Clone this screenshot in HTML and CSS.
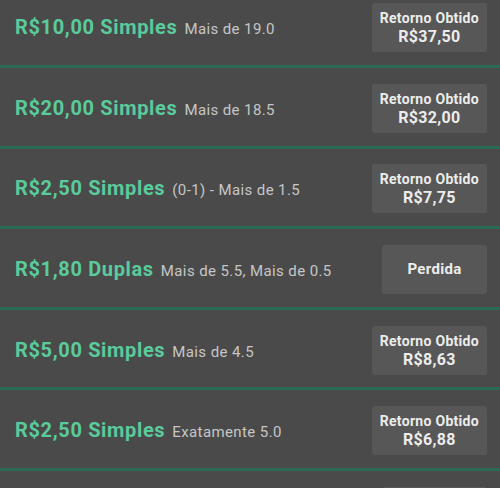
FILE: index.html
```html
<!DOCTYPE html>
<html>
<head>
<meta charset="utf-8">
<link rel="stylesheet" href="styles.css">
</head>
<body>
<div class="list">
  <div class="row">
    <div class="title"><span class="stake">R$10,00 Simples</span><span class="desc">Mais de 19.0</span></div>
    <div class="box"><span class="lbl">Retorno Obtido</span><span class="val">R$37,50</span></div>
  </div>
  <div class="row">
    <div class="title"><span class="stake">R$20,00 Simples</span><span class="desc">Mais de 18.5</span></div>
    <div class="box"><span class="lbl">Retorno Obtido</span><span class="val">R$32,00</span></div>
  </div>
  <div class="row">
    <div class="title"><span class="stake">R$2,50 Simples</span><span class="desc">(0-1) - Mais de 1.5</span></div>
    <div class="box"><span class="lbl">Retorno Obtido</span><span class="val">R$7,75</span></div>
  </div>
  <div class="row">
    <div class="title"><span class="stake">R$1,80 Duplas</span><span class="desc">Mais de 5.5, Mais de 0.5</span></div>
    <div class="box lost"><span class="lbl big">Perdida</span></div>
  </div>
  <div class="row">
    <div class="title"><span class="stake">R$5,00 Simples</span><span class="desc">Mais de 4.5</span></div>
    <div class="box"><span class="lbl">Retorno Obtido</span><span class="val">R$8,63</span></div>
  </div>
  <div class="row">
    <div class="title"><span class="stake">R$2,50 Simples</span><span class="desc">Exatamente 5.0</span></div>
    <div class="box"><span class="lbl">Retorno Obtido</span><span class="val">R$6,88</span></div>
  </div>
  <div class="row">
    <div class="title"></div>
    <div class="box"></div>
  </div>
</div>
</body>
</html>
```
FILE: styles.css
```css
html, body {
  margin: 0;
  padding: 0;
  background: #4a4a4a;
  overflow: hidden;
  height: 488px;
}
body {
  font-family: Roboto, "Noto Sans", sans-serif;
}
.list {
  margin-top: -12.6px;
}
.row {
  height: 77.6px;
  border-bottom: 3px solid #2e6b55;
  display: flex;
  align-items: center;
  justify-content: space-between;
  padding: 0 13px 0 15px;
  box-sizing: content-box;
}
.title {
  display: flex;
  align-items: baseline;
  gap: 7px;
  margin-top: 2px;
}
.stake {
  color: #5acb9c;
  font-weight: 700;
  font-size: 20px;
  letter-spacing: 0.65px;
}
.desc {
  color: #c6c6c6;
  font-size: 15px;
  letter-spacing: 0.4px;
}
.box {
  background: #575757;
  border-radius: 3px;
  height: 49px;
  min-width: 105px;
  padding: 0 8px;
  box-sizing: border-box;
  display: flex;
  flex-direction: column;
  align-items: center;
  justify-content: center;
  color: #ececec;
  font-weight: 700;
  margin-top: 3px;
}
.lbl {
  font-size: 14px;
  line-height: 18px;
  letter-spacing: 0.3px;
}
.val {
  font-size: 16px;
  line-height: 19px;
  letter-spacing: 0.3px;
}
.big {
  font-size: 15px;
}
```
